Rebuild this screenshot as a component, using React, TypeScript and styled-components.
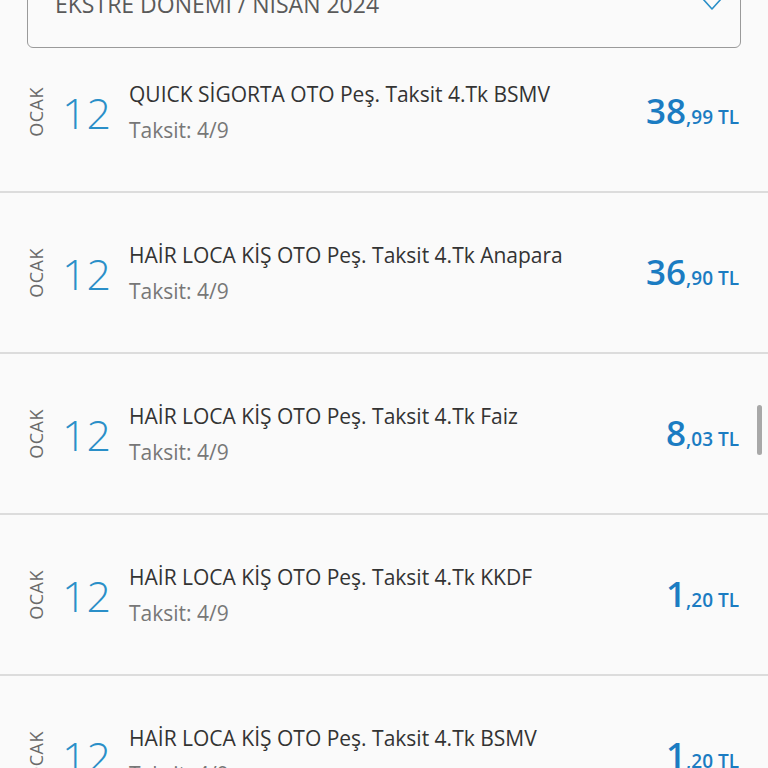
import styled, { createGlobalStyle } from "styled-components";

const GlobalStyle = createGlobalStyle`
  html, body {
    margin: 0;
    padding: 0;
    background: #fafafa;
    overflow: hidden;
  }
  body {
    font-family: "Open Sans", "Liberation Sans", sans-serif;
  }
`;

const items = [
  { title: "QUICK SİGORTA OTO Peş. Taksit 4.Tk BSMV", whole: "38", cents: "99" },
  { title: "HAİR LOCA KİŞ OTO Peş. Taksit 4.Tk Anapara", whole: "36", cents: "90" },
  { title: "HAİR LOCA KİŞ OTO Peş. Taksit 4.Tk Faiz", whole: "8", cents: "03" },
  { title: "HAİR LOCA KİŞ OTO Peş. Taksit 4.Tk KKDF", whole: "1", cents: "20" },
  { title: "HAİR LOCA KİŞ OTO Peş. Taksit 4.Tk BSMV", whole: "1", cents: "20" },
];

export default function App() {
  return (
    <>
      <GlobalStyle />
      <Screen>
        <Header>
          <SelectBox>
            <SelectText>EKSTRE DÖNEMİ / NİSAN 2024</SelectText>
            <svg width="20" height="13" viewBox="0 0 20 13" fill="none">
              <path d="M1 1 L10 11 L19 1" stroke="#2a8fc8" strokeWidth="1.6" strokeLinejoin="round" />
            </svg>
          </SelectBox>
        </Header>
        <List>
          {items.map((item, i) => (
            <Row key={i}>
              <DateBlock>
                <Month>OCAK</Month>
                <Day>12</Day>
              </DateBlock>
              <Info>
                <Title>{item.title}</Title>
                <Sub>Taksit: 4/9</Sub>
              </Info>
              <Amount>
                <Whole>{item.whole}</Whole>
                <Cents>,{item.cents} TL</Cents>
              </Amount>
            </Row>
          ))}
        </List>
        <ScrollThumb />
      </Screen>
    </>
  );
}

const Screen = styled.div`
  position: relative;
  width: 768px;
  height: 768px;
  overflow: hidden;
  background: #fafafa;
`;

const Header = styled.div`
  position: absolute;
  top: 0;
  left: 0;
  right: 0;
  height: 48px;
  padding: 0 27px;
  background: #fafafa;
  z-index: 2;
`;

const SelectBox = styled.div`
  box-sizing: border-box;
  margin-top: -14px;
  height: 62px;
  border: 1px solid #9a9a9a;
  border-radius: 6px;
  display: flex;
  justify-content: space-between;
  align-items: flex-start;
  padding: 2px 18px 0 27px;
  background: #fafafa;

  svg {
    margin-top: 9px;
  }
`;

const SelectText = styled.span`
  font-size: 23px;
  line-height: 30px;
  color: #5a5a5a;
`;

const List = styled.div`
  padding-top: 32px;
`;

const Row = styled.div`
  box-sizing: border-box;
  height: 161px;
  border-bottom: 2px solid #dcdcdc;
  display: flex;
  align-items: center;
  padding: 0 29px 0 26px;
`;

const DateBlock = styled.div`
  display: flex;
  align-items: center;
  gap: 16px;
  width: 103px;
`;

const Month = styled.span`
  writing-mode: vertical-rl;
  transform: rotate(180deg);
  font-size: 18px;
  line-height: 20px;
  letter-spacing: 0.5px;
  color: #6a6a6a;
`;

const Day = styled.span`
  font-size: 43px;
  font-weight: 300;
  line-height: 1;
  color: #2a8fc8;
  margin-top: 2px;
`;

const Info = styled.div`
  flex: 1;
  display: flex;
  flex-direction: column;
  gap: 8px;
`;

const Title = styled.span`
  font-size: 21px;
  line-height: 28px;
  color: #333;
`;

const Sub = styled.span`
  font-size: 21px;
  line-height: 28px;
  color: #777;
`;

const Amount = styled.div`
  display: flex;
  align-items: baseline;
  color: #1b7cc2;
`;

const Whole = styled.span`
  font-size: 35px;
  font-weight: 600;
  line-height: 1;
`;

const Cents = styled.span`
  font-size: 19px;
  font-weight: 600;
`;

const ScrollThumb = styled.div`
  position: absolute;
  left: 757px;
  top: 405px;
  width: 5px;
  height: 50px;
  border-radius: 3px;
  background: #a8a8a8;
`;
